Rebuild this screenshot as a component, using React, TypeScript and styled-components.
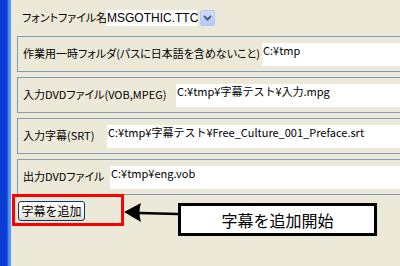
import styled, { createGlobalStyle } from 'styled-components';

const GlobalStyle = createGlobalStyle`
  html, body {
    margin: 0;
    padding: 0;
    background: #ece9d8;
  }
  body {
    font-family: 'Noto Sans CJK JP', sans-serif;
    font-size: 12px;
    color: #000;
  }
`;

const Window = styled.div`
  display: flex;
  width: 400px;
  height: 266px;
  overflow: hidden;
  background: #ece9d8;
`;

// left edge of the XP window frame
const Frame = styled.div`
  width: 11px;
  flex: none;
  background: linear-gradient(
    to right,
    #0b3cd2 0,
    #0b3cd2 7px,
    #1d5ee8 7px,
    #1d5ee8 8px,
    #3f8cf6 8px,
    #5aa0fa 11px
  );
`;

const Content = styled.div`
  position: relative;
  flex: 1;
  display: flex;
  flex-direction: column;
  padding: 9px 0 0 6px;
  font-family: 'Noto Sans CJK JP', sans-serif;
  font-feature-settings: 'palt';
`;

const FontRow = styled.div`
  display: flex;
  align-items: center;
  height: 17px;
  padding-left: 5px;
  margin-bottom: 10px;
`;

const Label = styled.span<{ $width: number }>`
  flex: none;
  font-size: 11px;
  line-height: 21px;
  white-space: nowrap;
  width: ${(p) => p.$width}px;
`;

const ComboText = styled.div`
  width: 91px;
  height: 16px;
  background: #fff;
  font-size: 12px;
  line-height: 16px;
  padding-left: 1px;
  box-sizing: border-box;
  font-family: 'Liberation Sans', 'Noto Sans CJK JP', sans-serif;
`;

const ComboButton = styled.div`
  width: 15px;
  height: 16px;
  margin-left: 3px;
  box-sizing: border-box;
  border: 1px solid #b5c9f4;
  border-radius: 2px;
  background: linear-gradient(#cddcfc, #b3c9f7);
  display: flex;
  align-items: center;
  justify-content: center;
`;

const Group = styled.div`
  display: flex;
  align-items: flex-start;
  height: 36px;
  box-sizing: border-box;
  margin-right: -20px;
  margin-bottom: 5px;
  padding: 6px 0 0 5px;
  border: 1px solid #7f9db9;
`;

const PathField = styled.div`
  flex: 1;
  height: 22px;
  background: #fff;
  font-size: 11px;
  line-height: 13px;
  padding: 1px 1px 0;
  white-space: nowrap;
  font-family: 'Noto Sans CJK JP', sans-serif;
  font-feature-settings: normal;
`;

const ButtonRow = styled.div`
  display: flex;
  margin-top: 1px;
  padding-left: 1px;
`;

const XpButton = styled.button`
  width: 67px;
  height: 20px;
  padding: 0;
  border: 1px solid #003c74;
  border-radius: 3px;
  background: linear-gradient(#ffffff, #f0efe8 70%, #dcd9cc);
  font-family: 'Noto Sans CJK JP', sans-serif;
  font-size: 12px;
  line-height: 18px;
  color: #000;
`;

const Highlight = styled.div`
  position: absolute;
  left: 1px;
  top: 194px;
  width: 112px;
  height: 32px;
  box-sizing: border-box;
  border: 3px solid #ff0000;
`;

const Arrow = styled.svg`
  position: absolute;
  left: 111px;
  top: 200px;
`;

const Callout = styled.div`
  position: absolute;
  left: 167px;
  top: 203px;
  width: 199px;
  height: 33px;
  box-sizing: border-box;
  border: 3px solid #000;
  background: #fff;
  display: flex;
  align-items: center;
  justify-content: center;
  font-size: 16px;
  font-feature-settings: normal;
`;

const fields = [
  { label: '作業用一時フォルダ(パスに日本語を含めないこと)', width: 239, value: 'C:¥tmp' },
  { label: '入力DVDファイル(VOB,MPEG)', width: 153, value: 'C:¥tmp¥字幕テスト¥入力.mpg' },
  { label: '入力字幕(SRT)', width: 84, value: 'C:¥tmp¥字幕テスト¥Free_Culture_001_Preface.srt' },
  { label: '出力DVDファイル', width: 87, value: 'C:¥tmp¥eng.vob' },
];

const App = () => {
  return (
    <Window>
      <GlobalStyle />
      <Frame />
      <Content>
        <FontRow>
          <Label $width={84}>フォントファイル名</Label>
          <ComboText>MSGOTHIC.TTC</ComboText>
          <ComboButton>
            <svg width="9" height="6" viewBox="0 0 9 6">
              <path d="M1 1 L4.5 4.5 L8 1" fill="none" stroke="#4d6185" strokeWidth="2" />
            </svg>
          </ComboButton>
        </FontRow>
        {fields.map((f) => (
          <Group key={f.label}>
            <Label $width={f.width}>{f.label}</Label>
            <PathField>{f.value}</PathField>
          </Group>
        ))}
        <ButtonRow>
          <XpButton>字幕を追加</XpButton>
        </ButtonRow>

        <Highlight />
        <Arrow width="60" height="28" viewBox="0 0 60 28">
          <path d="M2 12 L19 3 Q16 12 19 22 Z" fill="#000" />
          <path d="M17 13 L56 14" stroke="#000" strokeWidth="2.5" />
        </Arrow>
        <Callout>字幕を追加開始</Callout>
      </Content>
    </Window>
  );
};

export default App;
